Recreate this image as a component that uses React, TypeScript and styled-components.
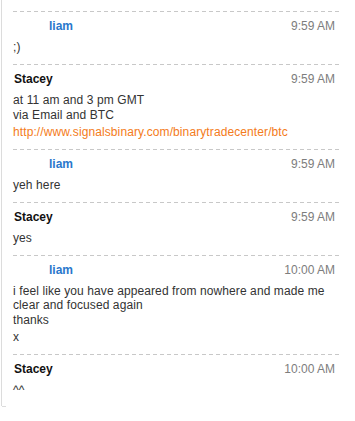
import React from 'react';
import styled, { createGlobalStyle } from 'styled-components';

const GlobalStyle = createGlobalStyle`
  html, body {
    margin: 0;
    padding: 0;
    background: #fff;
  }
  body {
    font-family: "Liberation Sans", Arial, sans-serif;
    font-size: 12px;
    color: #333;
  }
`;

const Page = styled.div`
  width: 355px;
  height: 421px;
  padding-left: 1px;
  box-sizing: border-box;
  overflow: hidden;
`;

const Panel = styled.div`
  border-left: 1px solid #dcdcdc;
  padding: 10px 14px 0 11px;
`;

const FootEdge = styled.div`
  margin-left: 1px;
  width: 4px;
  border-top: 1px solid #dcdcdc;
`;

const Message = styled.div`
  padding: 8px 0 9px;
  background-image: linear-gradient(to right, #c8c8c8 4px, transparent 4px);
  background-size: 7px 1px;
  background-repeat: repeat-x;
  background-position: 0 0;
  border-top: 1px solid transparent;
`;

const Header = styled.div`
  display: flex;
  align-items: center;
  justify-content: space-between;
  height: 15px;
  line-height: 15px;
  padding-right: 6px;
`;

const Name = styled.span<{ $self?: boolean }>`
  font-weight: bold;
  color: ${p => (p.$self ? '#2a78cc' : '#111')};
  padding-left: ${p => (p.$self ? '36px' : '1px')};
`;

const Time = styled.span`
  color: #7d7d7d;
`;

const Body = styled.div`
  margin-top: 6px;
  line-height: 14px;
  letter-spacing: 0.1px;
`;

const Line = styled.div<{ $last?: boolean }>`
  margin-top: ${p => (p.$last ? '3px' : '1px')};
  &:first-child {
    margin-top: 0;
  }
`;

const Link = styled.a`
  color: #f47b20;
  text-decoration: none;
`;

type Msg = {
  name: string;
  self?: boolean;
  time: string;
  lines: React.ReactNode[];
};

const messages: Msg[] = [
  { name: 'liam', self: true, time: '9:59 AM', lines: [';)'] },
  {
    name: 'Stacey',
    time: '9:59 AM',
    lines: [
      'at 11 am and 3 pm GMT',
      'via Email and BTC',
      <Link href="#">http://www.signalsbinary.com/binarytradecenter/btc</Link>,
    ],
  },
  { name: 'liam', self: true, time: '9:59 AM', lines: ['yeh here'] },
  { name: 'Stacey', time: '9:59 AM', lines: ['yes'] },
  {
    name: 'liam',
    self: true,
    time: '10:00 AM',
    lines: [
      'i feel like you have appeared from nowhere and made me clear and focused again',
      'thanks',
      'x',
    ],
  },
  { name: 'Stacey', time: '10:00 AM', lines: ['^^'] },
];

export default function App() {
  return (
    <>
      <GlobalStyle />
      <Page>
        <Panel>
          {messages.map((m, i) => (
            <Message key={i}>
              <Header>
                <Name $self={m.self}>{m.name}</Name>
                <Time>{m.time}</Time>
              </Header>
              <Body>
                {m.lines.map((l, j) => (
                  <Line key={j} $last={j > 0 && j === m.lines.length - 1}>
                    {l}
                  </Line>
                ))}
              </Body>
            </Message>
          ))}
        </Panel>
        <FootEdge />
      </Page>
    </>
  );
}
